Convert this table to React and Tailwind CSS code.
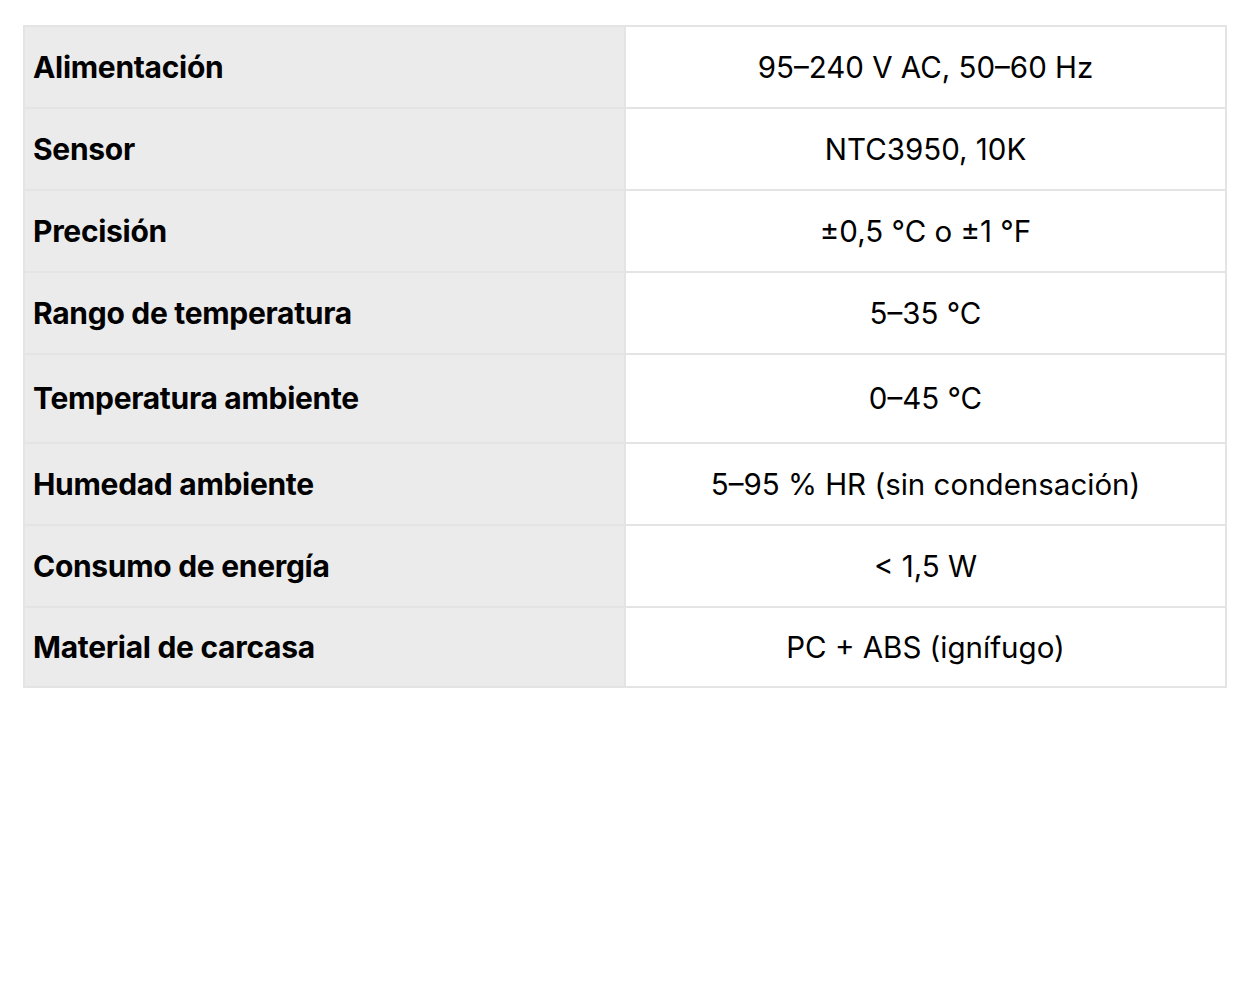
const rows = [
  { label: "Alimentación", value: "95–240 V AC, 50–60 Hz", h: "h-[80px]" },
  { label: "Sensor", value: "NTC3950, 10K", h: "h-[82px]" },
  { label: "Precisión", value: "±0,5 °C o ±1 °F", h: "h-[82px]" },
  { label: "Rango de temperatura", value: "5–35 °C", h: "h-[82px]" },
  { label: "Temperatura ambiente", value: "0–45 °C", h: "h-[89px]" },
  { label: "Humedad ambiente", value: "5–95 % HR (sin condensación)", h: "h-[82px]" },
  { label: "Consumo de energía", value: "< 1,5 W", h: "h-[82px]" },
  { label: "Material de carcasa", value: "PC + ABS (ignífugo)", h: "h-[80px]" },
];

export default function App() {
  return (
    <div className="min-h-screen bg-white pt-[25px] pl-[23px] font-['Inter',sans-serif] text-black">
      <div className="w-[1204px] border-2 border-[#e4e4e4]">
        {rows.map((r, i) => (
          <div
            key={r.label}
            className={`flex ${r.h} ${i > 0 ? "border-t-2 border-[#e4e4e4]" : ""}`}
          >
            <div className="w-[601px] bg-[#ebebeb] border-r-2 border-[#e4e4e4] flex items-center pl-[8px] text-[30px] font-bold tracking-[-0.3px]">
              {r.label}
            </div>
            <div className="flex-1 flex items-center justify-center text-[29.5px]">
              {r.value}
            </div>
          </div>
        ))}
      </div>
    </div>
  );
}
